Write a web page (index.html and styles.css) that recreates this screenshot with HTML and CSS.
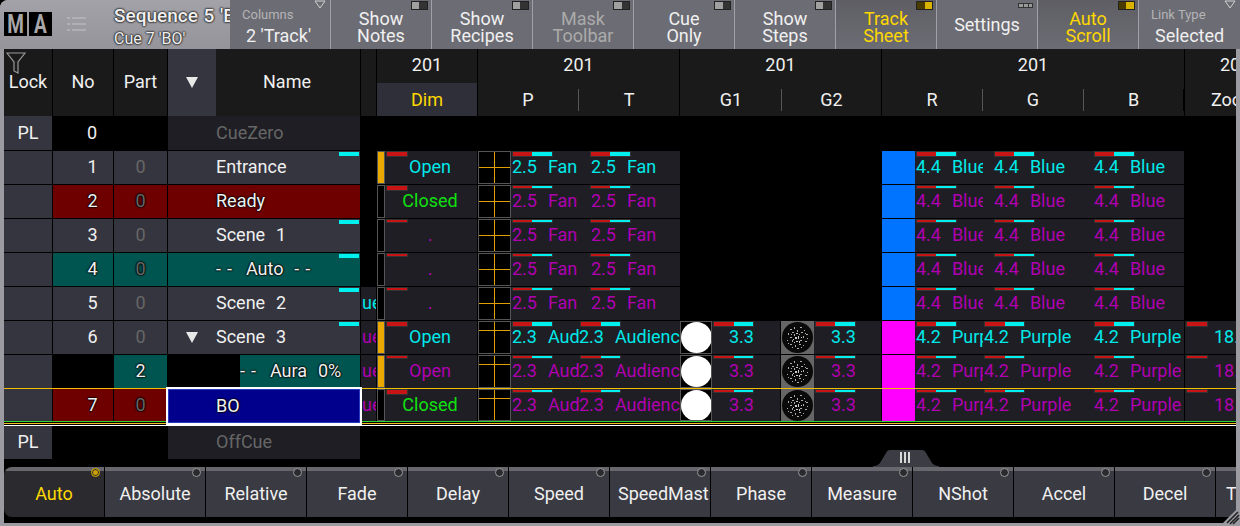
FILE: index.html
```html
<!DOCTYPE html>
<html lang="en">
<head>
    <meta charset="UTF-8">
    <meta name="viewport" content="width=device-width, initial-scale=1.0">
    <link rel="stylesheet" href="styles.css">
    <title>Sequence Sheet</title>
</head>
<body>
    <svg class="defs" width="0" height="0">
        <symbol id="gobo" viewBox="0 0 33 33">
            <rect width="33" height="33" fill="#666"/>
            <circle cx="16.5" cy="16.5" r="15.5" fill="#0a0a0a"/>
            <g fill="#aaa">
                <rect x="9" y="8" width="2" height="1"/><rect x="13" y="6" width="1" height="2"/><rect x="19" y="6" width="2" height="1"/><rect x="23" y="9" width="1" height="1"/>
                <rect x="7" y="12" width="1" height="2"/><rect x="11" y="11" width="2" height="1"/><rect x="16" y="9" width="1" height="2"/><rect x="20" y="11" width="2" height="1"/>
                <rect x="25" y="13" width="2" height="1"/><rect x="9" y="16" width="2" height="1"/><rect x="13" y="13" width="1" height="2"/><rect x="18" y="13" width="1" height="1"/>
                <rect x="22" y="15" width="1" height="2"/><rect x="6" y="19" width="1" height="1"/><rect x="11" y="19" width="1" height="2"/><rect x="19" y="19" width="2" height="1"/>
                <rect x="24" y="20" width="2" height="1"/><rect x="9" y="23" width="2" height="1"/><rect x="14" y="24" width="1" height="2"/><rect x="18" y="23" width="2" height="1"/>
                <rect x="22" y="24" width="1" height="1"/><rect x="16" y="27" width="2" height="1"/><rect x="11" y="26" width="1" height="1"/><rect x="26" y="17" width="1" height="1"/>
                <rect x="7" y="22" width="1" height="1"/><rect x="20" y="26" width="1" height="1"/><rect x="24" y="12" width="1" height="1"/><rect x="10" y="13" width="1" height="1"/>
            </g>
            <g fill="#ccc">
                <rect x="15" y="12" width="2" height="1"/><rect x="14" y="16" width="2" height="2"/><rect x="17" y="15" width="1" height="3"/><rect x="15" y="20" width="2" height="1"/>
                <rect x="12" y="18" width="1" height="1"/><rect x="20" y="16" width="1" height="1"/><rect x="18" y="20" width="1" height="2"/><rect x="13" y="21" width="1" height="1"/>
            </g>
        </symbol>
    </svg>

    <div class="window">
        <div class="topbar">
            <div class="titlebar">
                <div class="logo"><span><b>M</b></span><span><b>A</b></span></div>
                <svg class="listicon" width="20" height="16" viewBox="0 0 20 16">
                    <path d="M0 2h3M5 2h14M0 8h3M5 8h14M0 14h3M5 14h14" stroke="#c4c4c8" stroke-width="1.2" fill="none"/>
                </svg>
                <div class="title">
                    <div class="title-main">Sequence 5 'BO'</div>
                    <div class="title-sub">Cue 7 'BO'</div>
                </div>
            </div>
            <div class="tool tool-select">
                <span class="tool-label">Columns</span><span class="tool-value">2 'Track'</span>
                <svg class="tool-arrow" width="12" height="9" viewBox="0 0 12 9"><path d="M1 1h10L6 8z" fill="none" stroke="#d0d0d0"/></svg>
            </div>
            <div class="tool"><i class="toggle"></i>Show<br>Notes</div>
            <div class="tool"><i class="toggle"></i>Show<br>Recipes</div>
            <div class="tool tool-dim"><i class="toggle"></i>Mask<br>Toolbar</div>
            <div class="tool"><i class="toggle"></i>Cue<br>Only</div>
            <div class="tool"><i class="toggle"></i>Show<br>Steps</div>
            <div class="tool tool-on"><i class="toggle toggle-on"></i>Track<br>Sheet</div>
            <div class="tool tool-single"><i class="dots"></i>Settings</div>
            <div class="tool tool-on"><i class="toggle toggle-on"></i>Auto<br>Scroll</div>
            <div class="tool tool-select">
                <span class="tool-label">Link Type</span><span class="tool-value">Selected</span>
                <svg class="tool-arrow" width="12" height="9" viewBox="0 0 12 9"><path d="M1 1h10L6 8z" fill="none" stroke="#d0d0d0"/></svg>
            </div>
        </div>

        <div class="body">
            <div class="sheet">
                <div class="head">
                    <div class="hcell c-lock">
                        <svg class="filter" width="20" height="22" viewBox="0 0 20 22"><path d="M1 1h18l-7 9v11l-4-2v-9z" fill="none" stroke="#9a9a9a" stroke-width="1.2"/></svg>
                        Lock
                    </div>
                    <div class="hcell c-no">No</div>
                    <div class="hcell c-part">Part</div>
                    <div class="hcell c-name-head">
                        <span class="sort"></span><span class="name-label">Name</span>
                    </div>
                    <div class="track-head">
                        <div class="th-blank"></div>
                        <div class="group g-dim"><div class="group-no">201</div><div class="group-attrs"><span class="attr attr-dim">Dim</span></div></div>
                        <div class="group g-pos"><div class="group-no">201</div><div class="group-attrs"><span class="attr w-p">P</span><span class="attr w-t">T</span></div></div>
                        <div class="group g-gobo"><div class="group-no">201</div><div class="group-attrs"><span class="attr w-g">G1</span><span class="attr w-g">G2</span></div></div>
                        <div class="group g-rgb"><div class="group-no">201</div><div class="group-attrs"><span class="attr w-r">R</span><span class="attr w-gg">G</span><span class="attr w-b">B</span></div></div>
                        <div class="group g-zoom"><div class="group-no no-left">201</div><div class="group-attrs"><span class="attr attr-left">Zoom</span></div></div>
                    </div>
                </div>

                <div class="row row-pl">
                    <div class="cell c-lock grey center">PL</div>
                    <div class="cell c-zero num">0</div>
                    <div class="cell c-name dark muted">CueZero</div>
                </div>

                <div class="row">
                    <div class="cell c-lock grey"></div><div class="cell c-no grey num">1</div><div class="cell c-part grey part">0</div>
                    <div class="cell c-name grey">Entrance<i class="mark"></i></div>
                    <div class="track">
                        <div class="t-ue"></div>
                        <div class="t-lvl t-lvl-on"></div>
                        <div class="t-val w-dim cy"><i class="bar bar-red bar-thick"></i>Open</div>
                        <div class="t-pos"></div>
                        <div class="t-val w-p cy left"><i class="bar bar-thick"></i>2.5  Fan</div>
                        <div class="t-val w-t cy off"><i class="bar bar-thick"></i>2.5  Fan</div>
                        <div class="t-gap"></div>
                        <div class="t-col col-blue"></div>
                        <div class="t-val w-r cy left"><i class="bar bar-thick"></i>4.4  Blue</div>
                        <div class="t-val w-gg cy off"><i class="bar bar-thick"></i>4.4  Blue</div>
                        <div class="t-val w-b cy off"><i class="bar bar-thick"></i>4.4  Blue</div>
                    </div>
                </div>

                <div class="row">
                    <div class="cell c-lock grey"></div><div class="cell c-no red num txt-o">2</div><div class="cell c-part red part txt-o">0</div>
                    <div class="cell c-name red txt-o">Ready</div>
                    <div class="track">
                        <div class="t-ue"></div>
                        <div class="t-lvl"></div>
                        <div class="t-val w-dim gr"><i class="bar bar-red bar-thick"></i>Closed</div>
                        <div class="t-pos"></div>
                        <div class="t-val w-p pu left"><i class="bar"></i>2.5  Fan</div>
                        <div class="t-val w-t pu off"><i class="bar"></i>2.5  Fan</div>
                        <div class="t-gap"></div>
                        <div class="t-col col-blue"></div>
                        <div class="t-val w-r pu left"><i class="bar"></i>4.4  Blue</div>
                        <div class="t-val w-gg pu off"><i class="bar"></i>4.4  Blue</div>
                        <div class="t-val w-b pu off"><i class="bar"></i>4.4  Blue</div>
                    </div>
                </div>

                <div class="row">
                    <div class="cell c-lock grey"></div><div class="cell c-no grey num">3</div><div class="cell c-part grey part">0</div>
                    <div class="cell c-name grey">Scene  1<i class="mark"></i></div>
                    <div class="track">
                        <div class="t-ue"></div>
                        <div class="t-lvl"></div>
                        <div class="t-val w-dim pu"><i class="bar bar-red"></i>.</div>
                        <div class="t-pos"></div>
                        <div class="t-val w-p pu left"><i class="bar"></i>2.5  Fan</div>
                        <div class="t-val w-t pu off"><i class="bar"></i>2.5  Fan</div>
                        <div class="t-gap"></div>
                        <div class="t-col col-blue"></div>
                        <div class="t-val w-r pu left"><i class="bar"></i>4.4  Blue</div>
                        <div class="t-val w-gg pu off"><i class="bar"></i>4.4  Blue</div>
                        <div class="t-val w-b pu off"><i class="bar"></i>4.4  Blue</div>
                    </div>
                </div>

                <div class="row">
                    <div class="cell c-lock grey"></div><div class="cell c-no teal num txt-o">4</div><div class="cell c-part teal part txt-o">0</div>
                    <div class="cell c-name teal txt-o"><span class="dash">--</span>  Auto  <span class="dash">--</span><i class="mark"></i></div>
                    <div class="track">
                        <div class="t-ue"></div>
                        <div class="t-lvl"></div>
                        <div class="t-val w-dim pu"><i class="bar bar-red"></i>.</div>
                        <div class="t-pos"></div>
                        <div class="t-val w-p pu left"><i class="bar"></i>2.5  Fan</div>
                        <div class="t-val w-t pu off"><i class="bar"></i>2.5  Fan</div>
                        <div class="t-gap"></div>
                        <div class="t-col col-blue"></div>
                        <div class="t-val w-r pu left"><i class="bar"></i>4.4  Blue</div>
                        <div class="t-val w-gg pu off"><i class="bar"></i>4.4  Blue</div>
                        <div class="t-val w-b pu off"><i class="bar"></i>4.4  Blue</div>
                    </div>
                </div>

                <div class="row">
                    <div class="cell c-lock grey"></div><div class="cell c-no grey num">5</div><div class="cell c-part grey part">0</div>
                    <div class="cell c-name grey">Scene  2<i class="mark"></i></div>
                    <div class="track">
                        <div class="t-ue t-ue-on cy">ue</div>
                        <div class="t-lvl"></div>
                        <div class="t-val w-dim pu"><i class="bar bar-red"></i>.</div>
                        <div class="t-pos"></div>
                        <div class="t-val w-p pu left"><i class="bar"></i>2.5  Fan</div>
                        <div class="t-val w-t pu off"><i class="bar"></i>2.5  Fan</div>
                        <div class="t-gap"></div>
                        <div class="t-col col-blue"></div>
                        <div class="t-val w-r pu left"><i class="bar"></i>4.4  Blue</div>
                        <div class="t-val w-gg pu off"><i class="bar"></i>4.4  Blue</div>
                        <div class="t-val w-b pu off"><i class="bar"></i>4.4  Blue</div>
                    </div>
                </div>

                <div class="row">
                    <div class="cell c-lock grey"></div><div class="cell c-no grey num">6</div><div class="cell c-part grey part">0</div>
                    <div class="cell c-name-split grey"><span class="sort"></span><span>Scene  3</span><i class="mark"></i></div>
                    <div class="track">
                        <div class="t-ue t-ue-on pu">ue</div>
                        <div class="t-lvl t-lvl-on"></div>
                        <div class="t-val w-dim cy"><i class="bar bar-red bar-thick"></i>Open</div>
                        <div class="t-pos t-pos-high"></div>
                        <div class="t-val w-p cy left"><i class="bar bar-thick"></i>2.3  Audience</div>
                        <div class="t-val w-t cy left"><i class="bar bar-thick"></i>2.3  Audience</div>
                        <div class="t-gobo t-open"><i class="disc"></i></div>
                        <div class="t-val w-gv cy"><i class="bar bar-thick"></i>3.3</div>
                        <div class="t-gobo t-gobo-2"><svg width="33" height="33"><use href="#gobo"/></svg></div>
                        <div class="t-val w-gv2 cy"><i class="bar bar-thick"></i>3.3</div>
                        <div class="t-col col-pink"></div>
                        <div class="t-val w-r cy left"><i class="bar bar-thick"></i>4.2  Purple</div>
                        <div class="t-val w-gg cy left"><i class="bar bar-thick"></i>4.2  Purple</div>
                        <div class="t-val w-b cy off"><i class="bar bar-thick"></i>4.2  Purple</div>
                        <div class="t-val w-z cy"><i class="bar bar-red bar-thick"></i>18.</div>
                    </div>
                </div>

                <div class="row">
                    <div class="cell c-lock grey"></div><div class="cell c-no black"></div><div class="cell c-part teal center txt-o">2</div>
                    <div class="cell c-name-sub"><span class="sub-text txt-o"><span class="dash">--</span>  Aura  0%</span></div>
                    <div class="track">
                        <div class="t-ue t-ue-on pu">ue</div>
                        <div class="t-lvl t-lvl-on"></div>
                        <div class="t-val w-dim pu"><i class="bar bar-red"></i>Open</div>
                        <div class="t-pos t-pos-high"></div>
                        <div class="t-val w-p pu left"><i class="bar"></i>2.3  Audience</div>
                        <div class="t-val w-t pu left"><i class="bar"></i>2.3  Audience</div>
                        <div class="t-gobo t-open"><i class="disc"></i></div>
                        <div class="t-val w-gv pu"><i class="bar"></i>3.3</div>
                        <div class="t-gobo t-gobo-2"><svg width="33" height="33"><use href="#gobo"/></svg></div>
                        <div class="t-val w-gv2 pu"><i class="bar"></i>3.3</div>
                        <div class="t-col col-pink"></div>
                        <div class="t-val w-r pu left"><i class="bar"></i>4.2  Purple</div>
                        <div class="t-val w-gg pu left"><i class="bar"></i>4.2  Purple</div>
                        <div class="t-val w-b pu off"><i class="bar"></i>4.2  Purple</div>
                        <div class="t-val w-z pu"><i class="bar bar-red"></i>18.</div>
                    </div>
                </div>

                <div class="row row-last">
                    <div class="cell c-lock grey"></div><div class="cell c-no red num txt-o">7</div><div class="cell c-part red part txt-o">0</div>
                    <div class="cell c-name selected txt-o">BO</div>
                    <div class="track">
                        <div class="t-ue t-ue-on pu">ue</div>
                        <div class="t-lvl"></div>
                        <div class="t-val w-dim gr"><i class="bar bar-red bar-thick"></i>Closed</div>
                        <div class="t-pos t-pos-high"></div>
                        <div class="t-val w-p pu left"><i class="bar"></i>2.3  Audience</div>
                        <div class="t-val w-t pu left"><i class="bar"></i>2.3  Audience</div>
                        <div class="t-gobo t-open"><i class="disc"></i></div>
                        <div class="t-val w-gv pu"><i class="bar"></i>3.3</div>
                        <div class="t-gobo t-gobo-2"><svg width="33" height="33"><use href="#gobo"/></svg></div>
                        <div class="t-val w-gv2 pu"><i class="bar"></i>3.3</div>
                        <div class="t-col col-pink"></div>
                        <div class="t-val w-r pu left"><i class="bar"></i>4.2  Purple</div>
                        <div class="t-val w-gg pu left"><i class="bar"></i>4.2  Purple</div>
                        <div class="t-val w-b pu off"><i class="bar"></i>4.2  Purple</div>
                        <div class="t-val w-z pu"><i class="bar bar-red"></i>18.</div>
                    </div>
                </div>

                <div class="endlines"></div>

                <div class="row row-off">
                    <div class="cell c-lock grey center">PL</div>
                    <div class="cell c-zero"></div>
                    <div class="cell c-name dark muted">OffCue</div>
                </div>

                <div class="cue-line"></div>
                <svg class="handle" width="66" height="17" viewBox="0 0 66 17">
                    <path d="M0 16c4 0 5-1 7-3l6-10c1-2 2-3 4-3h32c2 0 3 1 4 3l6 10c2 2 3 3 7 3v1H0z" fill="#3c3c44"/>
                    <path d="M28 2v11M32 2v11M36 2v11" stroke="#d8d8d8" stroke-width="2"/>
                </svg>
            </div>

            <div class="softkeys">
                <div class="key key-on"><i class="led led-on"></i>Auto</div>
                <div class="key"><i class="led"></i>Absolute</div>
                <div class="key"><i class="led"></i>Relative</div>
                <div class="key"><i class="led"></i>Fade</div>
                <div class="key"><i class="led"></i>Delay</div>
                <div class="key"><i class="led"></i>Speed</div>
                <div class="key key-long"><i class="led"></i>SpeedMast</div>
                <div class="key"><i class="led"></i>Phase</div>
                <div class="key"><i class="led"></i>Measure</div>
                <div class="key"><i class="led"></i>NShot</div>
                <div class="key"><i class="led"></i>Accel</div>
                <div class="key"><i class="led"></i>Decel</div>
                <div class="key key-more">T</div>
            </div>
        </div>

        <svg class="resize" width="20" height="20" viewBox="0 0 20 20">
            <path d="M20 0v20H0z" fill="#9b9ba1"/>
            <path d="M18 6 7 17M19 9l-9 9M19 12l-6 6" stroke="#222" stroke-width="1.6"/>
        </svg>
    </div>
</body>
</html>
```

FILE: styles.css
```css
* {
    box-sizing: border-box;
}

html, body {
    margin: 0;
    height: 526px;
    overflow: hidden;
    background-color: #000;
    font-family: Roboto, "Liberation Sans", sans-serif;
    font-size: 18px;
    color: #f0f0f0;
}

.defs {
    position: absolute;
}

i {
    display: block;
    font-style: normal;
}

.window {
    position: relative;
    width: 1240px;
    height: 526px;
    display: flex;
    flex-direction: column;
    background-color: #9b9ba1;
    border-top-left-radius: 8px;
    overflow: hidden;
}

/* top bar */
.topbar {
    display: flex;
    height: 49px;
    flex: none;
}

.titlebar {
    width: 230px;
    flex: none;
    display: flex;
    overflow: hidden;
    background: linear-gradient(#a2a2a8, #94949a);
}

.logo {
    display: flex;
    gap: 2px;
    margin: 12px 0 0 4px;
    height: 24px;
}

.logo span {
    width: 23px;
    background-color: #000;
    color: #a8a8aa;
}

.logo b {
    display: block;
    font-size: 25px;
    line-height: 25px;
    text-align: center;
    transform: scaleX(.76);
}

.listicon {
    margin: 16px 0 0 15px;
    flex: none;
}

.title {
    margin-left: 27px;
    white-space: nowrap;
}

.title-main {
    margin-top: 5px;
    font-size: 19px;
    font-weight: 500;
    line-height: 22px;
    word-spacing: 1px;
    text-shadow: 0 0 2px #222, 0 0 2px #222, 0 0 2px #222;
}

.title-sub {
    margin-top: 3px;
    font-size: 16px;
    line-height: 18px;
    text-shadow: 0 0 2px #222, 0 0 2px #222, 0 0 2px #222;
}

.tool {
    position: relative;
    width: 101px;
    flex: none;
    padding-top: 10px;
    text-align: center;
    font-size: 18px;
    line-height: 17px;
    background-color: #6c6c74;
    border-right: 1px solid #a0a0a6;
}

.tool:last-child {
    border-right: 0;
}

.tool-single {
    padding-top: 16px;
}

.tool-dim {
    color: #ababab;
}

.tool-on {
    color: #ffd800;
    background: linear-gradient(#5e5e64, #6c6c74);
}

.toggle {
    position: absolute;
    top: 1px;
    right: 3px;
    width: 17px;
    height: 9px;
    border: 1px solid #222;
    background: linear-gradient(90deg, #a0a0a0 50%, #333 50%);
}

.toggle-on {
    background: linear-gradient(90deg, #4a3c00 50%, #d8b400 50%);
}

.dots {
    position: absolute;
    top: 3px;
    right: 4px;
    width: 15px;
    height: 5px;
    background: repeating-linear-gradient(90deg, #999 0 4px, #333 4px 5px);
    border: 1px solid #333;
}

.tool-select {
    padding: 3px 0 0 12px;
    text-align: left;
}

.tool-label {
    display: block;
    font-size: 13px;
    line-height: 15px;
    margin-top: 4px;
    color: #b4b4b4;
}

.tool-value {
    display: block;
    margin-top: 4px;
    line-height: 20px;
    padding-left: 4px;
}

.tool-arrow {
    position: absolute;
    top: 0;
    right: 4px;
}

/* sheet */
.body {
    flex: 1;
    margin: 0 4px 3px;
    display: flex;
    flex-direction: column;
    background-color: #000;
    overflow: hidden;
}

.sheet {
    position: relative;
    height: 418px;
    flex: none;
    overflow: hidden;
}

.head {
    display: flex;
    gap: 1px;
    height: 67px;
}

.hcell {
    position: relative;
    text-align: center;
    line-height: 65px;
    background-color: #1a1a1a;
}

.filter {
    position: absolute;
    top: 3px;
    left: 2px;
}

.c-lock { width: 48px; flex: none; }
.c-no { width: 60px; flex: none; }
.c-part { width: 53px; flex: none; }
.c-name { width: 192px; flex: none; padding-left: 48px; }
.c-zero { width: 114px; flex: none; }

.c-name-head {
    width: 192px;
    flex: none;
    display: flex;
    background-color: #1a1a1a;
}

.sort {
    width: 48px;
    flex: none;
    display: flex;
    justify-content: center;
    align-items: center;
}

.sort::before {
    content: "";
    border-left: 6px solid transparent;
    border-right: 6px solid transparent;
    border-top: 11px solid #e8e8e8;
}

.c-name-head .sort {
    background-color: #35353f;
}

.name-label {
    flex: 1;
    text-align: center;
    line-height: 65px;
    padding-right: 2px;
}

.track-head {
    display: flex;
    flex: none;
    width: 900px;
}

.th-blank {
    width: 16px;
    flex: none;
    background-color: #1a1a1a;
    border-right: 1px solid #000;
}

.group {
    flex: none;
    background-color: #1a1a1a;
    border-right: 1px solid #000;
}

.g-dim { width: 101px; }
.g-pos { width: 202px; }
.g-gobo { width: 202px; }
.g-rgb { width: 303px; }
.g-zoom { width: 80px; border-right: 0; }

.group-no {
    height: 34px;
    line-height: 31px;
    text-align: center;
}

.no-left {
    text-align: left;
    padding-left: 35px;
}

.group-attrs {
    display: flex;
    height: 33px;
    justify-content: flex-end;
    align-items: center;
}

.attr {
    flex: none;
    text-align: center;
    line-height: 22px;
    border-left: 1px solid #555;
}

.attr:first-child {
    border-left: 0;
}

.attr-dim {
    width: 100%;
    line-height: 33px;
    color: #ffd800;
    background-color: #2e2f38;
}

.attr-left {
    width: 100%;
    text-align: left;
    padding-left: 26px;
}

.group-attrs .w-p { width: 100px; }
.group-attrs .w-t { width: 101px; }
.group-attrs .w-g { width: 100px; }
.group-attrs .w-r { width: 100px; }
.group-attrs .w-gg { width: 101px; }
.group-attrs .w-b { width: 101px; }

.row {
    display: flex;
    gap: 1px;
    height: 33px;
    margin-bottom: 1px;
    line-height: 32px;
    word-spacing: 1px;
}

.row-pl {
    height: 34px;
    line-height: 33px;
}

.row-last {
    height: 32px;
    margin-bottom: 0;
}

.endlines {
    height: 5px;
    background: linear-gradient(#30d030 0 1px, #000 1px 2px, #f2c020 2px 3px, #000 3px 4px, #fff 4px 5px);
}

.cell {
    position: relative;
    white-space: pre;
}

.grey { background-color: #35353f; }
.red { background-color: #6e0000; }
.teal { background-color: #005550; }
.black { background-color: #000; }
.dark { background-color: #1e1e24; }

.center { text-align: center; }
.num { text-align: right; padding-right: 15.5px; }
.c-zero.num { padding-right: 70px; }
.part { text-align: center; color: #666; }
.muted { color: #666; }

.txt-o {
    text-shadow: 0 0 2px #000, 0 0 2px #000, 0 0 2px #000;
}

.dash {
    letter-spacing: 6px;
    margin-right: -3px;
}

.mark {
    position: absolute;
    top: 1px;
    right: 1px;
    width: 20px;
    height: 4px;
    background-color: #00f0f0;
}

.c-name-split {
    position: relative;
    width: 192px;
    flex: none;
    display: flex;
    white-space: pre;
}

.c-name-sub {
    width: 192px;
    flex: none;
    padding-left: 72px;
    white-space: pre;
}

.sub-text {
    display: block;
    background-color: #005550;
}

.selected {
    height: 34px;
    z-index: 2;
    background-color: #00008c;
    border: 1px solid #2a3ac0;
    line-height: 31px;
    padding-left: 47px;
    outline: 2px solid #fff;
}

/* tracking cells */
.track {
    display: flex;
    flex: none;
    width: 900px;
    white-space: pre;
}

.t-ue {
    width: 16px;
    flex: none;
    overflow: hidden;
}

.t-ue-on {
    background-color: #1e1e24;
    border-right: 1px solid #000;
    text-indent: 1px;
}

.t-lvl {
    width: 8px;
    flex: none;
    border: 1px solid #555;
    background-color: #000;
}

.t-lvl-on {
    background-color: #e8a800;
    background-clip: content-box;
}

.t-val {
    position: relative;
    flex: none;
    overflow: hidden;
    text-align: center;
    background-color: #1e1e24;
}

.w-dim { width: 93px; border-right: 1px solid #000; padding-right: 2px; }
.w-p { width: 68px; }
.w-t { width: 101px; }
.w-gv { width: 69px; border-right: 1px solid #000; padding-right: 9px; }
.w-gv2 { width: 68px; border-right: 1px solid #000; padding-right: 8px; }
.w-r { width: 68px; }
.w-gg { width: 100px; }
.w-b { width: 102px; border-right: 1px solid #000; }
.w-z { width: 60px; padding-left: 29px; text-align: left; }

.left { text-align: left; padding-left: 1px; }
.off { text-align: left; padding-left: 11px; }
.w-t.off { padding-left: 12px; }
.w-t.left { padding-left: 0; }

.cy { color: #00e8e8; }
.pu { color: #b000b0; }
.gr { color: #10e010; }

.bar {
    position: absolute;
    top: 0;
    left: 1px;
    width: 41px;
    height: 4px;
    border: 1px solid #333;
    background: linear-gradient(90deg, #c81414 50%, #00f0f0 50%);
}

.bar-thick {
    height: 6px;
}

.bar-red {
    width: 22px;
    background: #c81414;
}

.off .bar {
    left: 11px;
}

.t-pos {
    width: 33px;
    flex: none;
    border: 1px solid #555;
    background-color: #000;
    background-image: linear-gradient(#e0a000, #e0a000), linear-gradient(#e0a000, #e0a000);
    background-size: 1px 100%, 100% 1px;
    background-position: 50% 0, 0 50%;
    background-repeat: no-repeat;
}

.t-pos-high {
    background-position: 50% 0, 0 8px;
}

.t-gap {
    width: 202px;
    flex: none;
}

.t-gobo {
    flex: none;
    overflow: hidden;
}

.t-open {
    width: 32px;
    background-color: #000;
    border: 1px solid #555;
}

.disc {
    width: 31px;
    height: 31px;
    border-radius: 50%;
    background-color: #fff;
}

.t-gobo-2 {
    width: 33px;
}

.t-col {
    width: 33px;
    flex: none;
}

.col-blue { background-color: #0073ff; }
.col-pink { background-color: #ff00ff; }

/* overlays */
.cue-line {
    position: absolute;
    top: 339px;
    left: 0;
    right: 0;
    height: 1px;
    z-index: 1;
    background-color: #f2c000;
}

.handle {
    position: absolute;
    right: 297px;
    bottom: 0;
}

/* bottom softkeys */
.softkeys {
    display: flex;
    gap: 1px;
    height: 56px;
    padding-bottom: 6px;
    overflow: hidden;
    border-top-left-radius: 8px;
    border-bottom-left-radius: 8px;
}

.key {
    position: relative;
    width: 100px;
    flex: none;
    text-align: center;
    padding-top: 16px;
    line-height: 22px;
    white-space: nowrap;
    overflow: hidden;
    background: linear-gradient(#67676d 4px, #3a3a42 4px);
}

.key:first-child {
    border-bottom-left-radius: 8px;
}

.key-on {
    color: #ffd800;
    background: linear-gradient(#67676d 4px, #2b2b2f 4px);
}

.key-long {
    text-align: left;
    padding-left: 8px;
}

.key-more {
    text-align: left;
    padding-left: 10px;
}

.led {
    position: absolute;
    top: 1px;
    right: 4px;
    width: 9px;
    height: 9px;
    border: 1px solid #999;
    border-radius: 50%;
    background-color: #2b2b2f;
}

.led-on {
    border-color: #c8a000;
    background-color: #c8a000;
    box-shadow: inset 0 0 0 1px #2b2b2f;
}

.resize {
    position: absolute;
    right: 0;
    bottom: 0;
}
```
